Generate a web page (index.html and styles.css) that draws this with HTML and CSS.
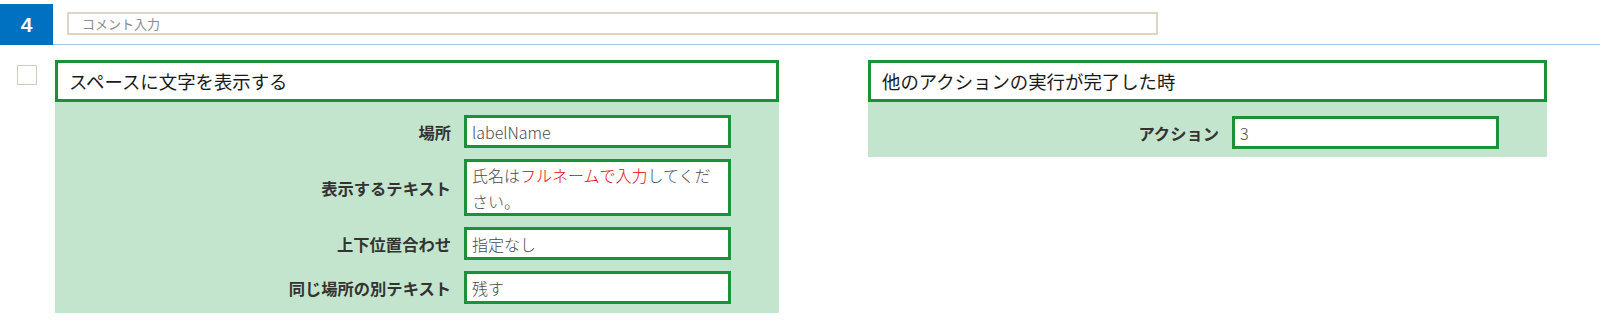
FILE: index.html
```html
<!DOCTYPE html>
<html lang="ja">
<head>
    <meta charset="UTF-8">
    <title>アクション設定</title>
    <link rel="stylesheet" href="styles.css">
</head>
<body>
    <div class="step-head">
        <div class="step-num">4</div>
        <div class="step-comment">
            <input type="text" class="comment" placeholder="コメント入力">
        </div>
    </div>
    <div class="step-body">
        <div class="check"></div>
        <div class="card card-left">
            <div class="card-title">スペースに文字を表示する</div>
            <div class="card-fields">
                <div class="field">
                    <div class="label">場所</div>
                    <div class="value">labelName</div>
                </div>
                <div class="field">
                    <div class="label">表示するテキスト</div>
                    <div class="value multi">氏名は<span class="red">フルネームで入力</span>してください。</div>
                </div>
                <div class="field">
                    <div class="label">上下位置合わせ</div>
                    <div class="value">指定なし</div>
                </div>
                <div class="field">
                    <div class="label">同じ場所の別テキスト</div>
                    <div class="value">残す</div>
                </div>
            </div>
        </div>
        <div class="card card-right">
            <div class="card-title">他のアクションの実行が完了した時</div>
            <div class="card-fields">
                <div class="field">
                    <div class="label">アクション</div>
                    <div class="value">3</div>
                </div>
            </div>
        </div>
    </div>
</body>
</html>
```

FILE: styles.css
```css
* {
    box-sizing: border-box;
}
body {
    margin: 0;
    padding: 0;
    font-family: "Noto Sans CJK JP", "Noto Sans", sans-serif;
    color: #222;
    background: white;
}
.step-head {
    display: flex;
    padding-top: 4px;
}
.step-num {
    width: 53px;
    height: 41px;
    background: #0070c0;
    color: white;
    font-family: "Liberation Sans", Arial, sans-serif;
    font-weight: bold;
    font-size: 21px;
    display: flex;
    align-items: center;
    justify-content: center;
}
.step-comment {
    flex: 1;
    padding: 8px 0 0 14px;
    border-bottom: 1px solid #a9c1e3;
}
.comment {
    display: block;
    width: 1091px;
    height: 23px;
    margin: 0;
    border: 2px solid #e0d4c6;
    padding: 0 13px;
    font-family: "Noto Sans CJK JP", sans-serif;
    font-size: 13px;
    outline: none;
}
.comment::placeholder {
    color: #8a8a8a;
}
.step-body {
    display: flex;
    align-items: flex-start;
    padding-top: 15px;
}
.check {
    width: 20px;
    height: 20px;
    margin: 5px 0 0 17px;
    border: 1px solid #d8cabb;
}
.card-left {
    width: 724px;
    margin-left: 18px;
}
.card-right {
    width: 679px;
    margin-left: 89px;
}
.card-title {
    height: 42px;
    border: 3px solid #1c9238;
    background: white;
    padding-left: 11px;
    font-size: 18.4px;
    display: flex;
    align-items: center;
    color: #1a1a1a;
}
.card-fields {
    background: #c4e5cd;
    padding: 13px 48px 9px 0;
    display: flex;
    flex-direction: column;
    gap: 11px;
}
.card-right .card-fields {
    padding-top: 14px;
    padding-bottom: 8px;
}
.field {
    display: flex;
    align-items: center;
    gap: 13px;
}
.label {
    flex: 1;
    text-align: right;
    font-weight: bold;
    font-size: 16.3px;
    color: #333;
}
.value {
    width: 267px;
    height: 33px;
    border: 3px solid #1c9238;
    background: white;
    padding: 0 5px;
    font-size: 16px;
    color: #4a4a4a;
    font-weight: 300;
    display: flex;
    align-items: center;
}
.value.multi {
    display: block;
    height: 57px;
    line-height: 26px;
    padding-top: 0;
}
.red {
    color: #e60012;
}
```
